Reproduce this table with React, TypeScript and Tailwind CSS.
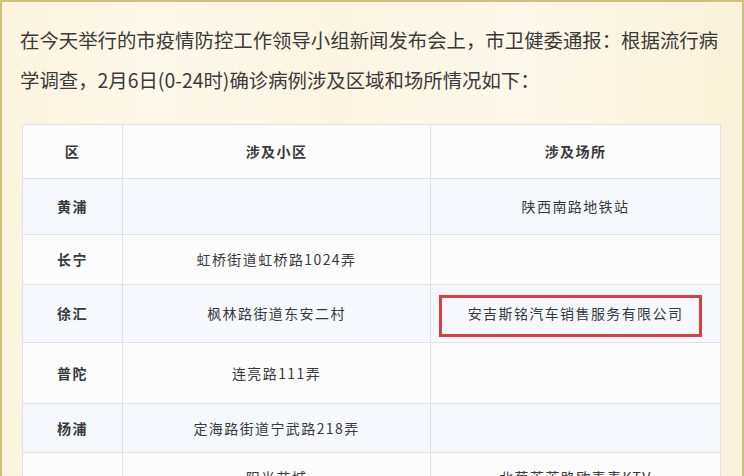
// App.tsx

const rows = [
  { district: "黄浦", community: "", place: "陕西南路地铁站", h: "h-[56px]", tint: true },
  { district: "长宁", community: "虹桥街道虹桥路1024弄", place: "", h: "h-[50px]", tint: false },
  { district: "徐汇", community: "枫林路街道东安二村", place: "安吉斯铭汽车销售服务有限公司", h: "h-[58px]", tint: true, mark: true },
  { district: "普陀", community: "连亮路111弄", place: "", h: "h-[61px]", tint: false },
  { district: "杨浦", community: "定海路街道宁武路218弄", place: "", h: "h-[49px]", tint: true }
];

export default function App() {
  return (
    <main
      className="h-[476px] w-[744px] overflow-hidden border-x-[2px] border-t-[2px] border-[#cfc07c] bg-[linear-gradient(90deg,#fcf4df,#fdf8ea_20%,#fcf5e3_45%,#fdf8eb_70%,#fbf2da)] text-[#3a3a3a]"
      style={{ fontFamily: '"Noto Sans CJK SC", "Noto Sans", sans-serif' }}
    >
      <p className="whitespace-nowrap px-[18px] pt-[18px] text-[19.4px] leading-[40px]">
        在今天举行的市疫情防控工作领导小组新闻发布会上，市卫健委通报：根据流行病
        <br />
        学调查，2月6日(0-24时)确诊病例涉及区域和场所情况如下：
      </p>

      <table className="ml-[20px] mt-[24px] w-[698px] table-fixed border-collapse text-[14px] tracking-[1.4px] text-[#3a3a3a]">
        <colgroup>
          <col className="w-[100px]" />
          <col className="w-[308px]" />
          <col className="w-[290px]" />
        </colgroup>
        <thead>
          <tr className="h-[54px] bg-[#fcfcfc]">
            <th className="border-[1.5px] border-[#e2e2e4] font-bold">区</th>
            <th className="border-[1.5px] border-[#e2e2e4] font-bold">涉及小区</th>
            <th className="border-[1.5px] border-[#e2e2e4] font-bold">涉及场所</th>
          </tr>
        </thead>
        <tbody>
          {rows.map((row) => (
            <tr key={row.district} className={`${row.h} ${row.tint ? "bg-[#f5f8fd]" : "bg-[#fcfcfd]"}`}>
              <td className="border-[1.5px] border-[#e2e2e4] text-center font-bold">{row.district}</td>
              <td className="border-[1.5px] border-[#e2e2e4] text-center">{row.community}</td>
              <td className="relative border-[1.5px] border-[#e2e2e4] text-center">
                {row.place}
                {row.mark && (
                  <span className="absolute bottom-[5px] left-[8px] right-[18px] top-[10px] border-[3px] border-[#d9403f]" />
                )}
              </td>
            </tr>
          ))}
          <tr className="h-[120px] bg-[#fcfcfd]">
            <td className="border-[1.5px] border-[#e2e2e4] text-center font-bold"></td>
            <td className="border-[1.5px] border-[#e2e2e4] pt-[10px] text-center align-top leading-[28px]">
              阳光花城
            </td>
            <td className="border-[1.5px] border-[#e2e2e4] pt-[10px] text-center align-top leading-[28px]">
              北蔡芳芳路欧麦麦KTV
            </td>
          </tr>
        </tbody>
      </table>
    </main>
  );
}
